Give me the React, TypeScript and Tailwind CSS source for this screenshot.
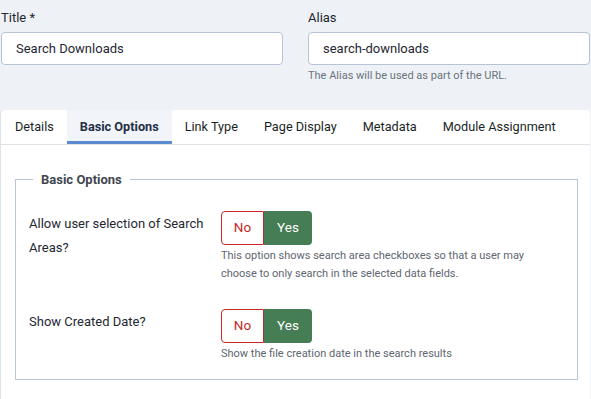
const tabs = ["Details", "Basic Options", "Link Type", "Page Display", "Metadata", "Module Assignment"];

function Toggle() {
  return (
    <div className="flex h-[34px] w-[91px] text-[13.5px]">
      <div className="flex w-[43px] items-center justify-center rounded-l-[4px] border border-[#c52827] bg-white text-[#c52827]">
        No
      </div>
      <div className="flex w-[48px] items-center justify-center rounded-r-[4px] bg-[#457d54] text-white">
        Yes
      </div>
    </div>
  );
}

function OptionRow({ label, help }: { label: string; help: string[] }) {
  return (
    <div className="flex">
      <div className="w-[192px] pt-[1px] text-[13px] leading-[24px] text-[#1f2733]">{label}</div>
      <div>
        <Toggle />
        <div className="mt-[2px] text-[11px] leading-[18px] text-[#5e6670]">
          {help.map((h) => (
            <div key={h}>{h}</div>
          ))}
        </div>
      </div>
    </div>
  );
}

export default function App() {
  return (
    <div className="h-[399px] w-[591px] overflow-hidden bg-[#eef2f6] font-['Roboto',sans-serif] text-[#1f2733]">
      <div className="flex gap-[25px] pl-[1px] pt-[8px]">
        <div className="w-[282px]">
          <div className="mb-[4px] text-[13px] leading-[20px]">Title *</div>
          <div className="flex h-[33px] items-center rounded-[4px] border border-[#b7c4d8] bg-white pl-[14px] text-[13px]">
            Search Downloads
          </div>
        </div>
        <div className="w-[282px]">
          <div className="mb-[4px] text-[13px] leading-[20px]">Alias</div>
          <div className="flex h-[33px] items-center rounded-[4px] border border-[#b7c4d8] bg-white pl-[14px] text-[13px]">
            search-downloads
          </div>
          <div className="mt-[3px] text-[11px] leading-[16px] text-[#6b7280]">The Alias will be used as part of the URL.</div>
        </div>
      </div>

      <div className="mt-[26px] h-[300px] w-[590px] rounded-t-[4px] border-l border-[#dfe3e8] bg-white">
        <div className="flex h-[35px] border-b border-[#dfe3e8] text-[12.7px] text-[#1a1f26]">
          {tabs.map((t) => (
            <div
              key={t}
              className={
                t === "Basic Options"
                  ? "flex items-center whitespace-nowrap border-b-[3px] border-[#5b8ad0] bg-[#f1f4f8] px-[13px] pt-[3px] font-bold text-[#1f3047]"
                  : "flex items-center whitespace-nowrap px-[13px] first:pl-[14px]"
              }
            >
              {t}
            </div>
          ))}
        </div>

        <div className="px-[14px] pt-[25px]">
          <fieldset className="h-[210px] w-[563px] border border-[#b8c6dc] pl-[13px] pr-[13px]">
            <legend className="ml-[4px] px-[8px] text-[13px] font-bold text-[#40464e]">Basic Options</legend>
            <div className="mt-[21px] flex flex-col gap-[26px]">
              <OptionRow
                label="Allow user selection of Search Areas?"
                help={[
                  "This option shows search area checkboxes so that a user may",
                  "choose to only search in the selected data fields.",
                ]}
              />
              <OptionRow label="Show Created Date?" help={["Show the file creation date in the search results"]} />
            </div>
          </fieldset>
        </div>
      </div>
    </div>
  );
}
